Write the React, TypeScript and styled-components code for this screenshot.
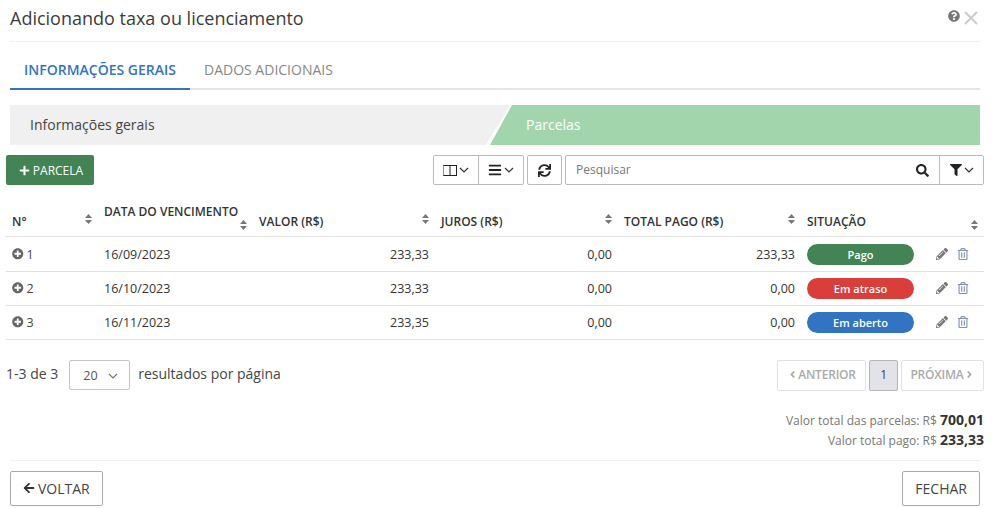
import { FC } from 'react'
import styled, { createGlobalStyle } from 'styled-components'
import {
    FaArrowLeft, FaBars, FaFilter, FaPencilAlt, FaPlus, FaPlusCircle,
    FaQuestionCircle, FaRegTrashAlt, FaSearch, FaSync, FaAngleLeft, FaAngleRight
} from 'react-icons/fa'

const GlobalStyle = createGlobalStyle`
    html, body { margin: 0; padding: 0; background: #fff; }
    body { font-family: "Open Sans", "Liberation Sans", sans-serif; font-size: 13px; color: #333; }
`

const Page = styled.div`
    width: 992px;
    height: 508px;
    overflow: hidden;
    box-sizing: border-box;
    padding: 0 8px 0 6px;
`
const Header = styled.div`
    margin: 0 4px;
    height: 41px;
    border-bottom: 1px solid #f1f1f1;
    display: flex;
    justify-content: space-between;
    align-items: flex-start;
`
const Title = styled.h4`
    margin: 7px 0 0;
    font-size: 18px;
    line-height: 22px;
    font-weight: 400;
    color: #3c3c3c;
`
const HeaderIcons = styled.div`
    display: flex;
    align-items: flex-start;
    gap: 4px;
    margin-top: 10px;
    margin-right: 2px;
    color: #777;
    font-size: 12px;
`
const CloseSvg = styled.svg`
    width: 14px;
    height: 14px;
    margin-top: 1px;
    stroke: #ccc;
    stroke-width: 2;
    fill: none;
`
const Tabs = styled.div`
    margin: 9px 4px 0;
    height: 37px;
    display: flex;
    border-bottom: 2px solid #e4e4ea;
`
const Tab = styled.div<{ $active?: boolean }>`
    padding: 0 14px;
    height: 37px;
    line-height: 38px;
    font-size: 14px;
    font-weight: ${p => (p.$active ? 600 : 400)};
    color: ${p => (p.$active ? '#3574bf' : '#888')};
    border-bottom: 2px solid ${p => (p.$active ? '#3574bf' : 'transparent')};
`
const Steps = styled.div`
    margin: 15px 4px 0;
    height: 40px;
    display: flex;
    background: #fff;
`
const StepGeneral = styled.div`
    width: 500px;
    margin-right: -20px;
    box-sizing: border-box;
    background: #f0f0f0;
    padding-left: 20px;
    line-height: 40px;
    font-size: 14px;
    color: #444;
    clip-path: polygon(0 0, 100% 0, calc(100% - 24px) 100%, 0 100%);
`
const StepInstallments = styled.div`
    flex: 1;
    background: #a2d5ab;
    padding-left: 36px;
    line-height: 40px;
    font-size: 14px;
    color: #fff;
    clip-path: polygon(22px 0, 100% 0, 100% 100%, 0 100%);
`
const Toolbar = styled.div`
    margin-top: 10px;
    height: 30px;
    display: flex;
    align-items: stretch;
`
const AddButton = styled.button`
    width: 88px;
    border: 0;
    border-radius: 2px;
    background: #438454;
    color: #fff;
    font: 400 12px "Open Sans", sans-serif;
    display: flex;
    align-items: center;
    justify-content: center;
    gap: 3px;
    padding: 0 0 0 2px;
    margin-right: 339px;
`
const ButtonGroup = styled.div`
    display: flex;
    border: 1px solid #bbb;
    border-radius: 2px;
    box-sizing: border-box;
    margin-right: 3px;
    &:last-child { margin-right: 0; }
`
const ToolButton = styled.div<{ $width: number }>`
    width: ${p => p.$width}px;
    display: flex;
    align-items: center;
    justify-content: center;
    gap: 2px;
    color: #222;
    font-size: 14px;
    & + & { border-left: 1px solid #bbb; }
`
const ChevronSvg = styled.svg`
    width: 10px;
    height: 6px;
    stroke: #333;
    stroke-width: 1.2;
    fill: none;
    flex: none;
`
const SearchGroup = styled(ButtonGroup)`
    flex: 1;
`
const SearchText = styled.div`
    flex: 1;
    padding-left: 10px;
    line-height: 28px;
    font-size: 12px;
    color: #777;
`
const Table = styled.table`
    width: 978px;
    margin-top: 14px;
    border-collapse: collapse;
    table-layout: fixed;
    tbody tr:first-child td {
        height: 35px;
        padding-top: 1px;
    }
`
const Th = styled.th`
    height: 37px;
    padding: 0 6px 6px;
    box-sizing: border-box;
    vertical-align: bottom;
    text-align: left;
    font-size: 12px;
    line-height: 16px;
    font-weight: 600;
    color: #333;
    border-bottom: 1px solid #e2e2e2;
`
const HeadInner = styled.div`
    display: flex;
    justify-content: space-between;
    align-items: flex-start;
`
const WrappedHead = styled.div`
    margin-bottom: -5px;
    position: relative;
    top: -5px;
    white-space: nowrap;
`
const Td = styled.td<{ $right?: boolean }>`
    height: 34px;
    padding: 0 6px;
    box-sizing: border-box;
    font-size: 12.5px;
    color: #333;
    text-align: ${p => (p.$right ? 'right' : 'left')};
    border-bottom: 1px solid #e2e2e2;
`
const NumberCell = styled.span`
    display: flex;
    align-items: center;
    gap: 3px;
    color: #444;
`
const ExpandIcon = styled(FaPlusCircle)`
    color: #666;
    font-size: 11.5px;
`
const StatusCell = styled.div`
    display: flex;
    align-items: center;
`
const StatusPill = styled.div<{ $color: string }>`
    width: 107px;
    height: 21px;
    border-radius: 11px;
    background: ${p => p.$color};
    color: #fff;
    font-size: 11px;
    font-weight: 600;
    line-height: 21px;
    text-align: center;
`
const Actions = styled.div`
    display: flex;
    align-items: center;
    gap: 9px;
    padding-left: 22px;
`
const EditIcon = styled(FaPencilAlt)`
    color: #777;
    font-size: 12px;
`
const TrashIcon = styled(FaRegTrashAlt)`
    color: #7f93b3;
    font-size: 12px;
`
const Pagination = styled.div`
    margin-top: 20px;
    height: 31px;
    display: flex;
    align-items: flex-start;
    justify-content: space-between;
`
const PageInfo = styled.div`
    display: flex;
    align-items: flex-start;
    font-size: 14px;
    line-height: 28px;
    color: #444;
`
const PageSize = styled.div`
    width: 61px;
    height: 30px;
    box-sizing: border-box;
    margin: 0 8px 0 11px;
    padding: 3px 11px 0 13px;
    border: 1px solid #c4c4c4;
    border-radius: 2px;
    display: flex;
    align-items: center;
    justify-content: space-between;
    font-size: 12.5px;
    color: #555;
    svg { stroke: #777; }
`
const Pager = styled.div`
    display: flex;
    gap: 3px;
`
const PageButton = styled.div<{ $width: number; $current?: boolean }>`
    width: ${p => p.$width}px;
    height: 31px;
    box-sizing: border-box;
    padding-bottom: 2px;
    border: 1px solid ${p => (p.$current ? '#b5b5b5' : '#e2e2e2')};
    border-radius: 2px;
    background: ${p => (p.$current ? '#e2e3e8' : '#fff')};
    color: ${p => (p.$current ? '#444' : '#aaa')};
    font-size: 12px;
    font-weight: ${p => (p.$current ? 400 : 600)};
    display: flex;
    align-items: center;
    justify-content: center;
    letter-spacing: -0.2px;
`
const Totals = styled.div`
    margin-top: 20px;
    text-align: right;
    font-size: 12px;
    line-height: 20px;
    color: #777;
    strong {
        font-size: 14px;
        line-height: 1;
        font-weight: 700;
        color: #333;
    }
`
const Footer = styled.div`
    margin: 9px 4px 0;
    padding-top: 10px;
    border-top: 1px solid #f1f1f1;
    display: flex;
    justify-content: space-between;
`
const FooterButton = styled.button`
    height: 35px;
    padding: 0 12px;
    background: #fff;
    border: 1px solid #aaa;
    border-radius: 2px;
    font: 400 14px "Open Sans", sans-serif;
    color: #444;
    display: flex;
    align-items: center;
    gap: 3px;
    svg { font-size: 12px; color: #333; }
`

const SortSvg = styled.svg<{ $top?: number }>`
    width: 7px;
    height: 10px;
    flex: none;
    margin-top: ${p => p.$top ?? 0}px;
`

const SortIcon: FC<{ top?: number }> = ({ top }) => (
    <SortSvg $top={top} viewBox="0 0 7 10">
        <path d="M3.5 0 7 4H0zM0 6h7l-3.5 4z" fill="#777" />
    </SortSvg>
)

const Chevron = () => (
    <ChevronSvg viewBox="0 0 10 6">
        <path d="M1 1l4 4 4-4" />
    </ChevronSvg>
)

const ColumnsIcon = () => (
    <svg width="14" height="11" viewBox="0 0 14 11" fill="none">
        <rect x="0.5" y="0.5" width="13" height="10" stroke="#222" />
        <path d="M7 0.5v10" stroke="#222" />
        <path d="M0.5 0.5v10" stroke="#d9822b" />
    </svg>
)

const rows = [
    { id: 1, due: '16/09/2023', value: '233,33', fee: '0,00', paid: '233,33', status: 'Pago', color: '#438454' },
    { id: 2, due: '16/10/2023', value: '233,33', fee: '0,00', paid: '0,00', status: 'Em atraso', color: '#da3e3b' },
    { id: 3, due: '16/11/2023', value: '233,35', fee: '0,00', paid: '0,00', status: 'Em aberto', color: '#3273c2' }
]

const App = () => {
    return (
        <Page>
            <GlobalStyle />
            <Header>
                <Title>Adicionando taxa ou licenciamento</Title>
                <HeaderIcons>
                    <FaQuestionCircle />
                    <CloseSvg viewBox="0 0 14 14"><path d="M1 1l12 12M13 1L1 13" /></CloseSvg>
                </HeaderIcons>
            </Header>
            <Tabs>
                <Tab $active>INFORMAÇÕES GERAIS</Tab>
                <Tab>DADOS ADICIONAIS</Tab>
            </Tabs>
            <Steps>
                <StepGeneral>Informações gerais</StepGeneral>
                <StepInstallments>Parcelas</StepInstallments>
            </Steps>
            <Toolbar>
                <AddButton><FaPlus size={11} />PARCELA</AddButton>
                <ButtonGroup>
                    <ToolButton $width={44}><ColumnsIcon /><Chevron /></ToolButton>
                    <ToolButton $width={44}><FaBars /><Chevron /></ToolButton>
                </ButtonGroup>
                <ButtonGroup>
                    <ToolButton $width={33}><FaSync size={13} /></ToolButton>
                </ButtonGroup>
                <SearchGroup>
                    <SearchText>Pesquisar</SearchText>
                    <ToolButton $width={33}><FaSearch size={13} /></ToolButton>
                    <ToolButton $width={43}><FaFilter size={12} /><Chevron /></ToolButton>
                </SearchGroup>
            </Toolbar>
            <Table>
                <colgroup>
                    <col width={92} />
                    <col width={155} />
                    <col width={182} />
                    <col width={183} />
                    <col width={183} />
                    <col width={183} />
                </colgroup>
                <thead>
                    <tr>
                        <Th><HeadInner>N°<SortIcon /></HeadInner></Th>
                        <Th>
                            <WrappedHead>DATA DO VENCIMENTO</WrappedHead>
                            <HeadInner><span /><SortIcon /></HeadInner>
                        </Th>
                        <Th><HeadInner>VALOR (R$)<SortIcon /></HeadInner></Th>
                        <Th><HeadInner>JUROS (R$)<SortIcon /></HeadInner></Th>
                        <Th><HeadInner>TOTAL PAGO (R$)<SortIcon /></HeadInner></Th>
                        <Th><HeadInner>SITUAÇÃO<SortIcon top={6} /></HeadInner></Th>
                    </tr>
                </thead>
                <tbody>
                    {rows.map(row => (
                        <tr key={row.id}>
                            <Td><NumberCell><ExpandIcon />{row.id}</NumberCell></Td>
                            <Td>{row.due}</Td>
                            <Td $right>{row.value}</Td>
                            <Td $right>{row.fee}</Td>
                            <Td $right>{row.paid}</Td>
                            <Td>
                                <StatusCell>
                                    <StatusPill $color={row.color}>{row.status}</StatusPill>
                                    <Actions><EditIcon /><TrashIcon /></Actions>
                                </StatusCell>
                            </Td>
                        </tr>
                    ))}
                </tbody>
            </Table>
            <Pagination>
                <PageInfo>
                    1-3 de 3
                    <PageSize>20<Chevron /></PageSize>
                    resultados por página
                </PageInfo>
                <Pager>
                    <PageButton $width={89}><FaAngleLeft size={11} />ANTERIOR</PageButton>
                    <PageButton $width={29} $current>1</PageButton>
                    <PageButton $width={83}>PRÓXIMA<FaAngleRight size={11} /></PageButton>
                </Pager>
            </Pagination>
            <Totals>
                <div>Valor total das parcelas: R$ <strong>700,01</strong></div>
                <div>Valor total pago: R$ <strong>233,33</strong></div>
            </Totals>
            <Footer>
                <FooterButton><FaArrowLeft />VOLTAR</FooterButton>
                <FooterButton>FECHAR</FooterButton>
            </Footer>
        </Page>
    )
}

export default App
